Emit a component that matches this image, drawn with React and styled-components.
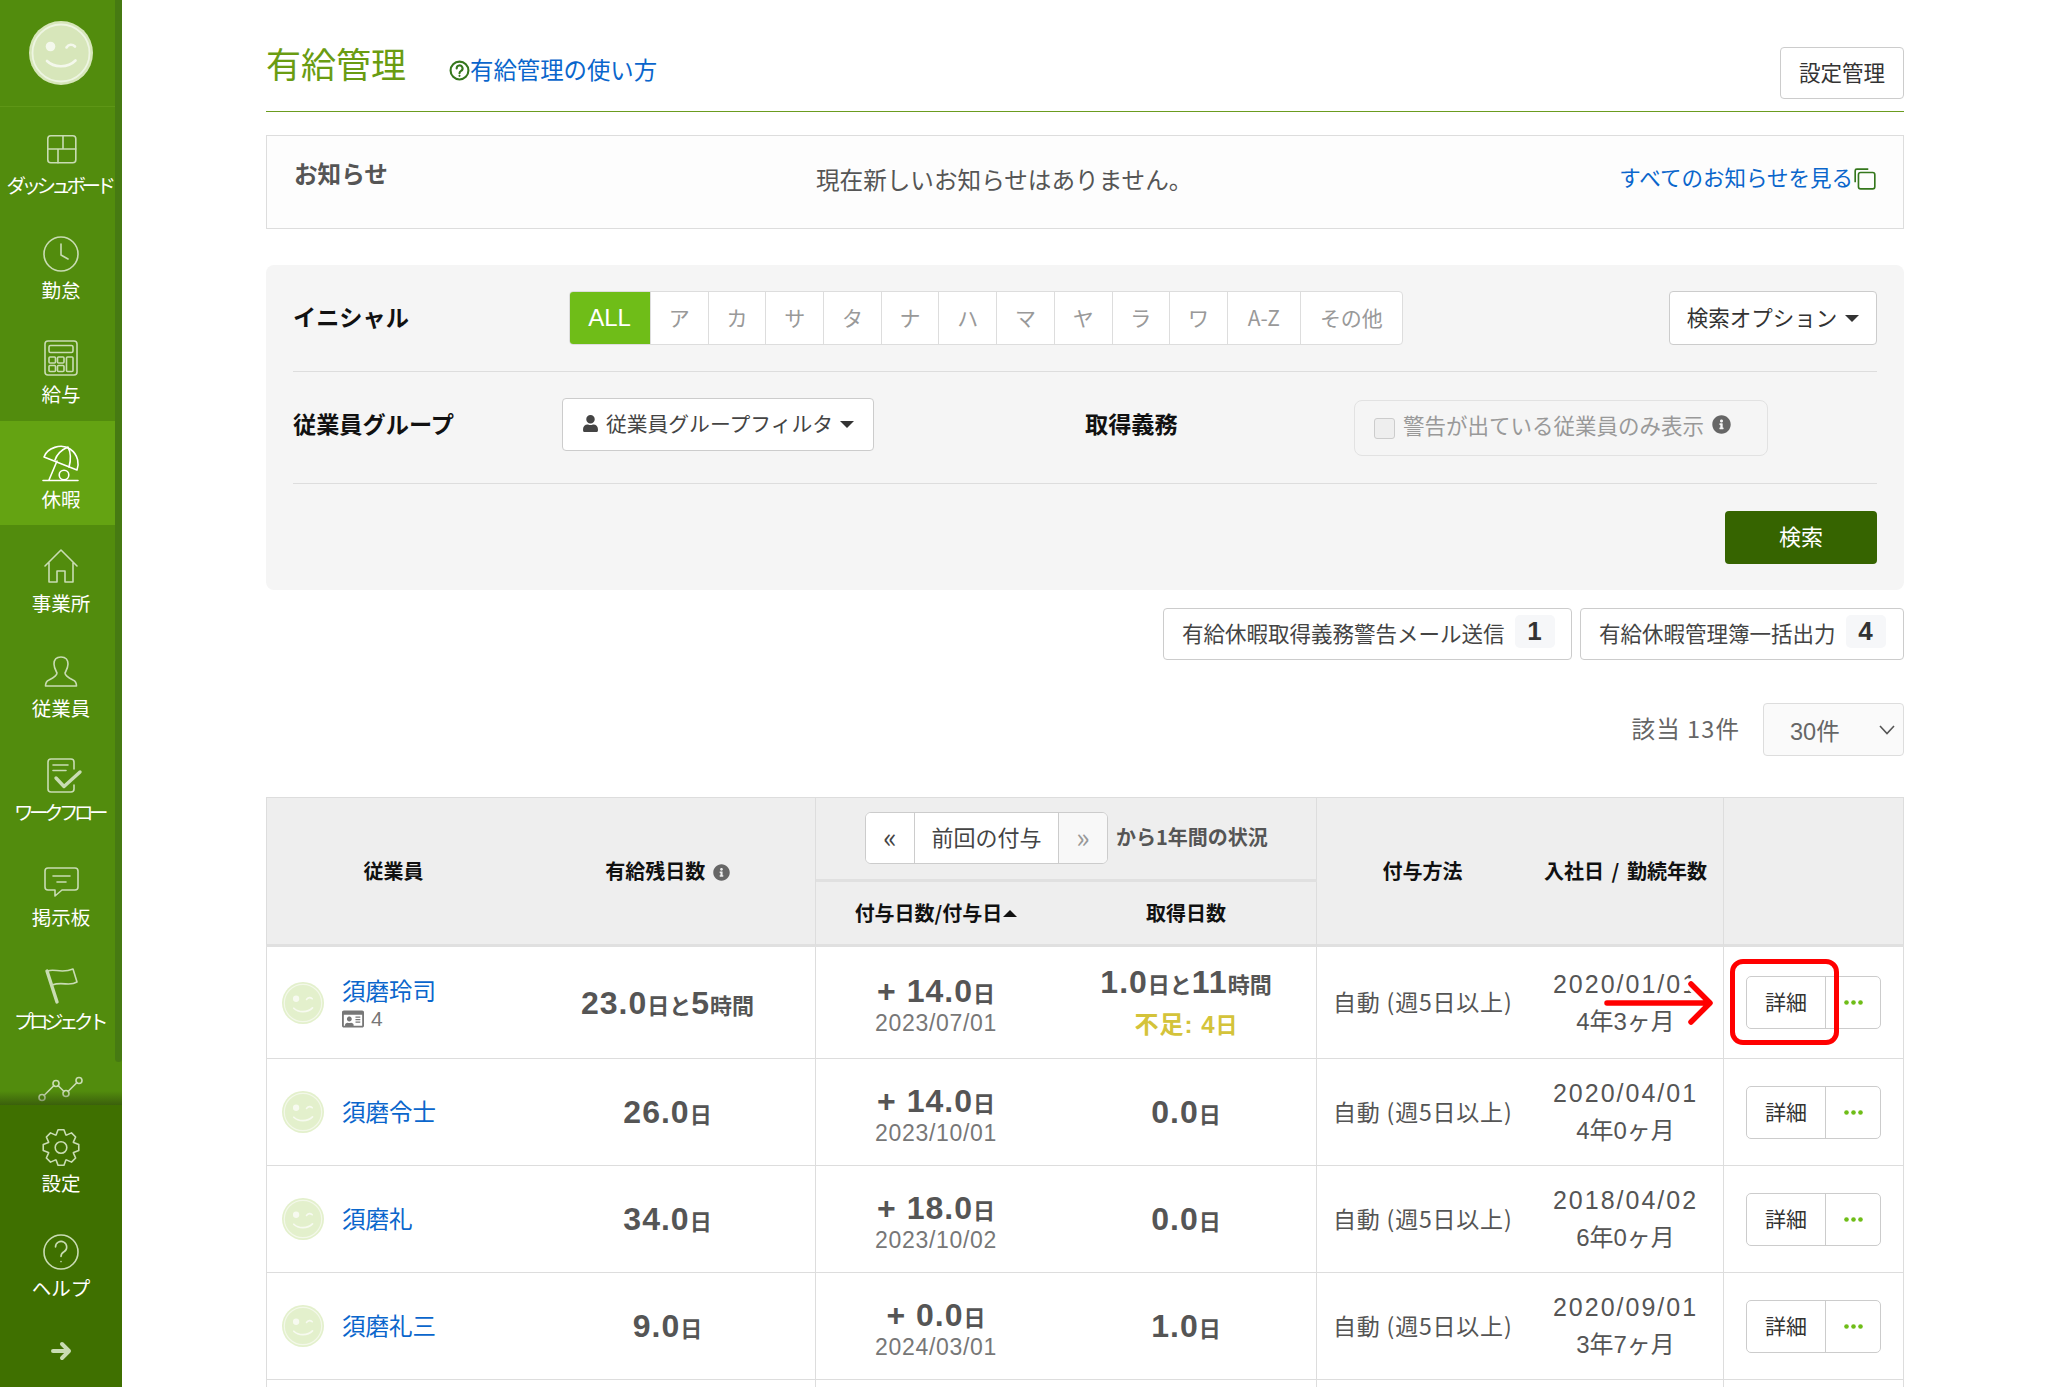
import React from "react";
import styled, { createGlobalStyle, css } from "styled-components";
import { FaUser, FaInfoCircle, FaRegIdCard } from "react-icons/fa";

const FONT = `"Liberation Sans", "Noto Sans CJK JP", sans-serif`;

const Global = createGlobalStyle`
  html, body { margin: 0; height: 100%; overflow: hidden; background: #fff; }
  body { font-family: ${FONT}; color: #555; }
  * { box-sizing: border-box; }
`;

const Page = styled.div`
  display: flex;
  width: 2048px;
  height: 1387px;
  overflow: hidden;
`;

/* ---------- sidebar ---------- */
const Sidebar = styled.aside`
  flex: 0 0 122px;
  display: flex;
  flex-direction: column;
  background: #528c0d;
  height: 100%;
`;
const ScrollArea = styled.div`
  position: relative;
  flex: 0 0 1105px;
  overflow: hidden;
`;
const Thumb = styled.div`
  position: absolute;
  top: 0;
  right: 0;
  width: 7px;
  height: 1062px;
  background: #467a12;
  border-radius: 0 0 4px 4px;
`;
const Fade = styled.div`
  position: absolute;
  left: 0;
  right: 0;
  bottom: 0;
  height: 14px;
  background: linear-gradient(rgba(40, 60, 10, 0), rgba(40, 60, 10, 0.55));
`;
const LogoBox = styled.div`
  height: 107px;
  display: flex;
  justify-content: center;
  padding-top: 21px;
  border-bottom: 1px solid #5e9616;
`;
const NavItem = styled.div`
  height: 104.5px;
  padding-top: 24px;
  display: flex;
  flex-direction: column;
  align-items: center;
  color: #c9dcb3;
  ${(p) => p.$active && css`background: #64a312; color: #fff;`}
`;
const NavLabel = styled.span`
  margin-top: 4px;
  margin-left: ${(p) => p.$tight ? "-4px" : "0"};
  height: 28px;
  line-height: 28px;
  font-size: 19.5px;
  color: #fff;
  white-space: nowrap;
  letter-spacing: ${(p) => p.$tight ? "-4.5px" : "0"};
  font-family: "Noto Sans CJK JP", sans-serif;
`;
const NavSvg = styled.svg`
  width: 44px;
  height: 36px;
  fill: none;
  stroke: currentColor;
  stroke-width: 1.6;
  stroke-linecap: round;
  stroke-linejoin: round;
  overflow: visible;
`;
const SideFoot = styled.div`
  flex: 1;
  background: #3f7000;
`;
const ArrowItem = styled.div`
  height: 72px;
  padding-top: 27px;
  display: flex;
  justify-content: center;
  color: #c9dcb3;
`;

const gearPoints = () => {
  const pts = [];
  const n = 8;
  for (let i = 0; i < n; i++) {
    const a = (i / n) * Math.PI * 2 - Math.PI / 2;
    const w = Math.PI / n;
    const p = (r, o) => `${(22 + r * Math.cos(a + o)).toFixed(2)} ${(18.5 + r * Math.sin(a + o)).toFixed(2)}`;
    pts.push(p(13.5, -w * 0.95), p(18, -w * 0.42), p(18, w * 0.42), p(13.5, w * 0.95));
  }
  return "M" + pts.join(" L") + " Z";
};

const icons = {
  dash: <><rect x="8.8" y="4.8" width="28" height="27" rx="3" /><path d="M8.8 18H36.8M24 4.8V18M19 18V31.8" /></>,
  clock: <><circle cx="22" cy="18" r="17" /><path d="M22 8V19L29 23" /></>,
  calc: <><rect x="6" y="1" width="32" height="34" rx="3" /><rect x="10" y="5.5" width="24" height="7" rx="1.5" /><rect x="10" y="17" width="6.5" height="6" rx="1" /><rect x="18.5" y="17" width="6.5" height="6" rx="1" /><rect x="10" y="25.5" width="6.5" height="6" rx="1" /><rect x="18.5" y="25.5" width="6.5" height="6" rx="1" /><rect x="27.5" y="17" width="6.5" height="14.5" rx="1" /></>,
  umbrella: <><path d="M5 12C8 3 22 -2 31 4C40 10 40 20 38 25Z" /><path d="M29 2C22 5 18 9 16 15M29 2C32 8 32 15 30 22M18 16L10 35M4 35.5H39" /><circle cx="25" cy="30" r="4.8" /></>,
  house: <path d="M6 17L22 1L38 17M10 14V33H18V22H26V33H34V14" />,
  person: <path d="M22 3C17 3 15 6 15 10C15 14 17 17 18 19C18 22 14 24 10 26C7.5 27 6.5 29 6.5 32H37.5C37.5 29 36.5 27 34 26C30 24 26 22 26 19C27 17 29 14 29 10C29 6 27 3 22 3Z" />,
  doc: <><path d="M35 11V4A3 3 0 0 0 32 1H12A3 3 0 0 0 9 4V31A3 3 0 0 0 12 34H32A3 3 0 0 0 35 31V27M14 7H29M14 12.5H27" /><path d="M17 20L25 28.5L41 14" strokeWidth="3.4" /></>,
  chat: <path d="M9 5H36A3 3 0 0 1 39 8V24A3 3 0 0 1 36 27H23L16 33V27H9A3 3 0 0 1 6 24V8A3 3 0 0 1 9 5ZM14 13H31M18 19H27" />,
  flag: <><path d="M8 4L18 35" strokeWidth="3.4" /><path d="M9 4C15 1 22 7 34 2L38 15C30 20 24 14 13 18" /></>,
  graph: <><path d="M5 23.5L15 13.5M19 13.5L25 19.5M29 19.5L38 10.5" /><circle cx="3" cy="25.5" r="3" /><circle cx="17" cy="11.5" r="3" /><circle cx="27" cy="21.5" r="3" /><circle cx="40" cy="8.5" r="3" /></>,
  gear: <><path d={gearPoints()} /><circle cx="22" cy="18.5" r="5.8" /></>,
  help: <><circle cx="22" cy="18" r="17" /><path d="M16.5 13A5.6 5.6 0 1 1 25 17.8C23 19 22 20.4 22 22.5M22 27.5V27.6" /></>,
};

const navTop = [
  ["dash", "ダッシュボード", true],
  ["clock", "勤怠"],
  ["calc", "給与"],
  ["umbrella", "休暇", false, true],
  ["house", "事業所"],
  ["person", "従業員"],
  ["doc", "ワークフロー", true],
  ["chat", "掲示板"],
  ["flag", "プロジェクト", true],
  ["graph", ""],
];

const Nav = ({ icon, label, tight, active }) => (
  <NavItem $active={active}>
    <NavSvg viewBox="0 0 44 36">{icons[icon]}</NavSvg>
    {label && <NavLabel $tight={tight}>{label}</NavLabel>}
  </NavItem>
);

const Smile = ({ size, fill, ring, mark }) => (
  <svg width={size} height={size} viewBox="0 0 64 64" style={{ display: "block", flex: "none" }}>
    <circle cx="32" cy="32" r="32" fill={fill} />
    <circle cx="32" cy="32" r="28.5" fill="none" stroke={ring} strokeWidth="1.8" />
    <circle cx="21.5" cy="25.5" r="4.8" fill={mark} />
    <path d="M37.5 26.5C39.5 23 43.5 23 46 25.5" fill="none" stroke={mark} strokeWidth="2.6" strokeLinecap="round" />
    <path d="M18 40C25 47 39 47 46.5 39.5" fill="none" stroke={mark} strokeWidth="2.6" strokeLinecap="round" />
  </svg>
);

/* ---------- main ---------- */
const Main = styled.main`
  flex: 1;
  padding: 0 144px;
  min-width: 0;
`;
const Header = styled.header`
  height: 112px;
  display: flex;
  align-items: flex-start;
  border-bottom: 1px solid #6b9c1f;
`;
const Title = styled.h1`
  margin: 38px 0 0;
  font-size: 35px;
  line-height: 50px;
  font-weight: 400;
  color: #6a9c12;
  font-family: "Noto Sans CJK JP", sans-serif;
`;
const HelpLink = styled.a`
  margin: 51px 0 0 43px;
  display: flex;
  align-items: center;
  font-size: 23.4px;
  line-height: 36px;
  color: #0a66cc;
  font-family: "Noto Sans CJK JP", sans-serif;
`;
const QMark = styled.svg`
  width: 21px;
  height: 21px;
  margin-top: 2px;
  fill: none;
  stroke: #35771c;
  stroke-width: 2;
  stroke-linecap: round;
`;
const OutlineButton = styled.button`
  height: ${(p) => p.$h || 52}px;
  padding: 0 18px 3px;
  background: #fff;
  border: 1px solid #ccc;
  border-radius: 4px;
  color: #333;
  font: 21.5px "Noto Sans CJK JP", sans-serif;
  white-space: nowrap;
  display: inline-flex;
  align-items: center;
  gap: 8px;
`;
const SettingsButton = styled(OutlineButton)`
  margin: 47px 0 0 auto;
  width: 124px;
  justify-content: center;
  padding: 0 0 3px;
`;
const Notice = styled.section`
  margin-top: 23px;
  height: 94px;
  display: flex;
  align-items: flex-start;
  background: #fdfdfd;
  border: 1px solid #ddd;
  font-family: "Noto Sans CJK JP", sans-serif;
`;
const NoticeTitle = styled.strong`
  margin: 20px 0 0 27px;
  width: 522px;
  flex: none;
  font-size: 23.6px;
  line-height: 34px;
  color: #555;
`;
const NoticeText = styled.span`
  margin-top: 26px;
  font-size: 23.6px;
  line-height: 34px;
  color: #555;
  white-space: nowrap;
`;
const AllLink = styled.a`
  margin: 25px 26px 0 auto;
  display: flex;
  align-items: center;
  font-size: 21.5px;
  line-height: 32px;
  color: #0a66cc;
  white-space: nowrap;
`;
const CopySvg = styled.svg`
  width: 24px;
  height: 24px;
  margin-top: 3px;
  fill: none;
  stroke: #35771c;
  stroke-width: 1.5;
`;
const Panel = styled.section`
  margin-top: 36px;
  height: 325px;
  padding: 0 27px;
  background: #f5f5f5;
  border-radius: 8px;
  font-family: "Noto Sans CJK JP", sans-serif;
`;
const InitialRow = styled.div`
  height: 107px;
  padding-top: 26px;
  display: grid;
  grid-template-columns: 276px auto 1fr;
  align-items: start;
  border-bottom: 1px solid #ddd;
`;
const FilterRow = styled.div`
  height: 112px;
  padding-top: 26px;
  display: grid;
  grid-template-columns: 269px 523px 269px 1fr;
  align-items: start;
  border-bottom: 1px solid #ddd;
`;
const FieldLabel = styled.strong`
  font-size: 23.2px;
  line-height: ${(p) => p.$lh || 51}px;
  color: #111;
  white-space: nowrap;
`;
const Segments = styled.div`
  display: flex;
  height: 54px;
  border: 1px solid #ddd;
  border-radius: 4px;
  background: #fff;
  overflow: hidden;
`;
const Seg = styled.span`
  width: ${(p) => p.$w}px;
  display: flex;
  align-items: center;
  justify-content: center;
  padding-bottom: 3px;
  font-size: 21px;
  color: #999;
  border-left: 1px solid #ddd;
  &:first-child { border-left: 0; }
  ${(p) => p.$on && css`
    background: #6fbd18;
    color: #fff;
    padding-bottom: 0;
    margin: -1px 0 -1px -1px;
    font: 24px "Liberation Sans", sans-serif;
  `}
`;
const Caret = styled.i`
  display: inline-block;
  width: 0;
  height: 0;
  margin-top: 3px;
  border: 7px solid transparent;
  border-top-color: #333;
  border-bottom: 0;
`;
const OptionButton = styled(OutlineButton)`
  justify-self: end;
  width: 208px;
  height: 54px;
  justify-content: center;
  padding: 0 0 3px;
`;
const GroupButton = styled(OutlineButton)`
  width: 312px;
  height: 53px;
  justify-content: center;
  padding: 0 0 3px;
  gap: 7px;
  color: #444;
  font-size: 20.8px;
`;
const WarnBox = styled.label`
  width: 414px;
  height: 56px;
  margin-top: 2px;
  padding: 0 0 7px 19px;
  display: flex;
  align-items: center;
  gap: 8px;
  border: 1px solid #e2e2e2;
  border-radius: 8px;
  font-size: 21.5px;
  color: #999;
  white-space: nowrap;
`;
const FakeCheck = styled.span`
  width: 21px;
  height: 21px;
  flex: none;
  margin-top: 7px;
  background: #eee;
  border: 1.5px solid #ccc;
  border-radius: 3px;
`;
const InfoIcon = styled(FaInfoCircle)`
  width: ${(p) => p.$s || 18}px;
  height: ${(p) => p.$s || 18}px;
  color: #666;
  flex: none;
  vertical-align: -2px;
  margin-left: ${(p) => p.$ml || 0}px;
`;
const SearchRow = styled.div`
  padding-top: 27px;
  display: flex;
  justify-content: flex-end;
`;
const SearchButton = styled.button`
  width: 152px;
  height: 53px;
  padding-bottom: 6px;
  background: #366400;
  border: 0;
  border-radius: 4px;
  color: #fff;
  font: 22px "Noto Sans CJK JP", sans-serif;
`;
const BulkRow = styled.div`
  margin-top: 18px;
  display: flex;
  justify-content: flex-end;
  gap: 8px;
`;
const BulkButton = styled(OutlineButton)`
  width: ${(p) => p.$w}px;
  padding: 0 18px 3px;
  color: #444;
  gap: 10px;
  position: relative;
`;
const Badge = styled.span`
  width: 40px;
  height: 33px;
  margin-top: -3px;
  display: flex;
  align-items: center;
  justify-content: center;
  background: #f6f7f9;
  border-radius: 5px;
  font: bold 26px "Liberation Sans", sans-serif;
  color: #333;
  flex: none;
`;
const CountRow = styled.div`
  margin-top: 43px;
  height: 53px;
  display: flex;
  justify-content: flex-end;
  align-items: center;
  gap: 23px;
  font-family: "Noto Sans CJK JP", sans-serif;
`;
const CountText = styled.span`
  font-size: 23.5px;
  color: #666;
  white-space: nowrap;
  margin-top: -3px;
  letter-spacing: 1.1px;
  font-family: "Noto Sans CJK JP", sans-serif;
`;
const SelectBox = styled.div`
  width: 141px;
  height: 53px;
  padding: 0 6px 0 26px;
  display: flex;
  align-items: center;
  justify-content: space-between;
  background: #fafafa;
  border: 1px solid #ddd;
  border-radius: 4px;
  font: 23.5px "Liberation Sans", "Noto Sans CJK JP", sans-serif;
  color: #666;
`;

/* ---------- table ---------- */
const Table = styled.table`
  margin-top: 41px;
  width: 1638px;
  table-layout: fixed;
  border-collapse: separate;
  border-spacing: 0;
  font-family: "Liberation Sans", "Noto Sans CJK JP", sans-serif;
`;
const Th = styled.th`
  padding: 0 0 2px;
  background: #eee;
  font-size: 20px;
  font-weight: 700;
  color: #111;
  text-align: center;
  white-space: nowrap;
  word-spacing: 3px;
  border-top: ${(p) => p.$top ? "1px solid #ddd" : "0"};
  border-bottom: 3px solid #e0e0e0;
  border-left: ${(p) => p.$left ? "1px solid #ddd" : "0"};
  border-right: ${(p) => p.$right ? "1px solid #ddd" : "0"};
  font-family: "Noto Sans CJK JP", sans-serif;
`;
const Tr = styled.tr`
  height: ${(p) => p.$h}px;
`;
const Td = styled.td`
  padding: ${(p) => p.$pad || 0};
  text-align: ${(p) => p.$align || "center"};
  vertical-align: middle;
  border-bottom: 1px solid #ddd;
  border-left: ${(p) => p.$left ? "1px solid #ddd" : "0"};
  border-right: ${(p) => p.$right ? "1px solid #ddd" : "0"};
  white-space: nowrap;
  color: #555;
`;
const PagerRow = styled.div`
  display: flex;
  align-items: center;
  padding-left: 49px;
  gap: 8px;
`;
const Pager = styled.div`
  display: flex;
  height: 52px;
  border: 1px solid #ccc;
  border-radius: 6px;
  overflow: hidden;
  background: #fff;
`;
const PagerCell = styled.span`
  width: ${(p) => p.$w}px;
  display: flex;
  align-items: center;
  justify-content: center;
  padding-bottom: 3px;
  font-size: ${(p) => p.$fs || 22}px;
  font-weight: 400;
  color: ${(p) => p.$muted ? "#999" : "#444"};
  background: ${(p) => p.$muted ? "#f8f8f8" : "#fff"};
  border-left: 1px solid #ccc;
  &:first-child { border-left: 0; }
`;
const PagerNote = styled.span`
  font-size: 20px;
  color: #555;
  margin-top: -2px;
`;
const SortCaret = styled.i`
  display: inline-block;
  width: 0;
  height: 0;
  margin: 0 0 4px 1px;
  border: 7px solid transparent;
  border-bottom-color: #111;
  border-top: 0;
`;
const NameCell = styled.div`
  display: flex;
  align-items: center;
  padding-left: 15px;
  gap: 18px;
`;
const NameStack = styled.div`
  display: flex;
  flex-direction: column;
  margin-top: -2px;
`;
const NameLink = styled.a`
  font: 23.5px/34px "Noto Sans CJK JP", sans-serif;
  color: #0a66cc;
`;
const IdLine = styled.span`
  display: flex;
  align-items: center;
  gap: 7px;
  height: 24px;
  font-size: 21px;
  color: #777;
`;
const Big = styled.span`
  font-size: ${(p) => p.$s || 32}px;
  font-weight: 700;
  letter-spacing: 1px;
  color: ${(p) => p.$c || "#555"};
  line-height: ${(p) => p.$lh || 36}px;
`;
const Small = styled.span`
  font-size: 22px;
  font-weight: 700;
  color: ${(p) => p.$c || "#555"};
  font-family: "Noto Sans CJK JP", sans-serif;
`;
const Line = styled.div`
  line-height: ${(p) => p.$lh || 36}px;
  height: ${(p) => p.$lh || 36}px;
`;
const GrantStack = styled.div`
  padding-top: ${(p) => p.$top || 0}px;
`;
const DateLine = styled.div`
  font-size: 23px;
  line-height: 28px;
  letter-spacing: 0.7px;
  color: #777;
`;
const JoinDate = styled.div`
  font-size: 25px;
  line-height: 38px;
  letter-spacing: 2px;
  color: #555;
`;
const Tenure = styled.div`
  font-size: 24px;
  line-height: 38px;
  color: #555;
`;
const Method = styled.span`
  display: inline-block;
  padding-bottom: 3px;
  font-size: 23px;
  color: #555;
  font-family: "Noto Sans CJK JP", sans-serif;
  letter-spacing: 0.8px;
`;
const ActionWrap = styled.div`
  position: relative;
  display: flex;
  justify-content: center;
`;
const ActionGroup = styled.div`
  width: 135px;
  height: 53px;
  display: flex;
  border: 1px solid #ccc;
  border-radius: 5px;
  background: #fff;
`;
const DetailBtn = styled.span`
  width: 79px;
  display: flex;
  align-items: center;
  justify-content: center;
  padding-bottom: 3px;
  border-right: 1px solid #ccc;
  font: 21px "Noto Sans CJK JP", sans-serif;
  color: #333;
`;
const MoreBtn = styled.span`
  flex: 1;
  display: flex;
  align-items: center;
  justify-content: center;
`;
const RedBox = styled.div`
  position: absolute;
  left: 6px;
  top: -17px;
  width: 109px;
  height: 86px;
  border: 5.5px solid #f00;
  border-radius: 13px;
`;
const RedArrow = styled.svg`
  position: absolute;
  left: -123px;
  top: 4px;
  width: 112px;
  height: 46px;
  overflow: visible;
`;

const Dots = () => (
  <svg width="19" height="5" viewBox="0 0 19 5" style={{ display: "block" }}>
    <circle cx="2.5" cy="2.5" r="2.3" fill="#6fbd18" /><circle cx="9.5" cy="2.5" r="2.3" fill="#6fbd18" /><circle cx="16.5" cy="2.5" r="2.3" fill="#6fbd18" />
  </svg>
);

const rows = [
  { h: 112, name: "須磨玲司", id: "4", balance: <><Big>23.0</Big><Small>日と</Small><Big>5</Big><Small>時間</Small></>, plus: "+ 14.0", date: "2023/07/01",
    taken: <><Big $lh={38}>1.0</Big><Small>日と</Small><Big $lh={38}>11</Big><Small>時間</Small></>, short: true, join: "2020/01/01", ten: "4年3ヶ月", mark: true },
  { h: 107, name: "須磨令士", balance: <><Big>26.0</Big><Small>日</Small></>, plus: "+ 14.0", date: "2023/10/01", taken: <><Big>0.0</Big><Small>日</Small></>, join: "2020/04/01", ten: "4年0ヶ月" },
  { h: 107, name: "須磨礼", balance: <><Big>34.0</Big><Small>日</Small></>, plus: "+ 18.0", date: "2023/10/02", taken: <><Big>0.0</Big><Small>日</Small></>, join: "2018/04/02", ten: "6年0ヶ月" },
  { h: 107, name: "須磨礼三", balance: <><Big>9.0</Big><Small>日</Small></>, plus: "+ 0.0", date: "2024/03/01", taken: <><Big>1.0</Big><Small>日</Small></>, join: "2020/09/01", ten: "3年7ヶ月" },
];

const kana = ["ア", "カ", "サ", "タ", "ナ", "ハ", "マ", "ヤ", "ラ", "ワ"];

export default function App() {
  return (
    <Page>
      <Global />
      <Sidebar>
        <ScrollArea>
          <LogoBox><Smile size={64} fill="#d7e6ba" ring="#eef5e2" mark="#f4f8ec" /></LogoBox>
          {navTop.map(([icon, label, tight, active]) => (
            <Nav key={icon} icon={icon} label={label} tight={tight} active={active} />
          ))}
          <Thumb />
          <Fade />
        </ScrollArea>
        <SideFoot>
          <Nav icon="gear" label="設定" />
          <Nav icon="help" label="ヘルプ" />
          <ArrowItem>
            <svg width="22" height="20" viewBox="0 0 22 20" fill="none" stroke="currentColor" strokeWidth="4" strokeLinecap="round" strokeLinejoin="round">
              <path d="M3 10H19M12 3L19 10L12 17" />
            </svg>
          </ArrowItem>
        </SideFoot>
      </Sidebar>

      <Main>
        <Header>
          <Title>有給管理</Title>
          <HelpLink>
            <QMark viewBox="0 0 20 20"><circle cx="10" cy="10" r="8.5" /><path d="M7.3 8A2.8 2.8 0 1 1 11.5 10.4C10.5 11 10 11.6 10 12.6M10 15V15.1" /></QMark>
            有給管理の使い方
          </HelpLink>
          <SettingsButton>設定管理</SettingsButton>
        </Header>

        <Notice>
          <NoticeTitle>お知らせ</NoticeTitle>
          <NoticeText>現在新しいお知らせはありません。</NoticeText>
          <AllLink>
            すべてのお知らせを見る
            <CopySvg viewBox="0 0 22 22"><path d="M2 14V3.5A1.5 1.5 0 0 1 3.5 2H14" /><rect x="5" y="5" width="15" height="15" rx="2" /></CopySvg>
          </AllLink>
        </Notice>

        <Panel>
          <InitialRow>
            <FieldLabel>イニシャル</FieldLabel>
            <Segments>
              <Seg $w={81} $on>ALL</Seg>
              {kana.map((k) => <Seg key={k} $w={57.7}>{k}</Seg>)}
              <Seg $w={73}>A-Z</Seg>
              <Seg $w={102}>その他</Seg>
            </Segments>
            <OptionButton>検索オプション <Caret /></OptionButton>
          </InitialRow>
          <FilterRow>
            <FieldLabel $lh={50}>従業員グループ</FieldLabel>
            <div>
              <GroupButton><FaUser size={17} color="#444" />従業員グループフィルタ <Caret /></GroupButton>
            </div>
            <FieldLabel $lh={50}>取得義務</FieldLabel>
            <WarnBox><FakeCheck />警告が出ている従業員のみ表示 <InfoIcon $s={19} /></WarnBox>
          </FilterRow>
          <SearchRow><SearchButton>検索</SearchButton></SearchRow>
        </Panel>

        <BulkRow>
          <BulkButton $w={409}>有給休暇取得義務警告メール送信<Badge>1</Badge></BulkButton>
          <BulkButton $w={324}>有給休暇管理簿一括出力<Badge>4</Badge></BulkButton>
        </BulkRow>

        <CountRow>
          <CountText>該当 13件</CountText>
          <SelectBox>
            30件
            <svg width="20" height="12" viewBox="0 0 20 12" fill="none" stroke="#555" strokeWidth="1.6"><path d="M3 2L10 9.5L17 2" /></svg>
          </SelectBox>
        </CountRow>

        <Table>
          <colgroup>
            <col style={{ width: 254 }} /><col style={{ width: 296 }} /><col style={{ width: 240 }} /><col style={{ width: 261 }} />
            <col style={{ width: 211 }} /><col style={{ width: 196 }} /><col style={{ width: 180 }} />
          </colgroup>
          <thead>
            <Tr $h={85}>
              <Th rowSpan={2} $top $left>従業員</Th>
              <Th rowSpan={2} $top $right>有給残日数 <InfoIcon $s={17} /></Th>
              <Th colSpan={2} $top $right>
                <PagerRow>
                  <Pager>
                    <PagerCell $w={48} $fs={28}>«</PagerCell>
                    <PagerCell $w={144}>前回の付与</PagerCell>
                    <PagerCell $w={49} $fs={28} $muted>»</PagerCell>
                  </Pager>
                  <PagerNote>から1年間の状況</PagerNote>
                </PagerRow>
              </Th>
              <Th rowSpan={2} $top>付与方法</Th>
              <Th rowSpan={2} $top $right>入社日 / 勤続年数</Th>
              <Th rowSpan={2} $top $right></Th>
            </Tr>
            <Tr $h={65}>
              <Th>付与日数/付与日<SortCaret /></Th>
              <Th $right>取得日数</Th>
            </Tr>
          </thead>
          <tbody>
            {rows.map((r) => (
              <Tr key={r.name} $h={r.h}>
                <Td $left>
                  <NameCell>
                    <Smile size={42} fill="#e3f0cc" ring="#f3f8e9" mark="#f7faf0" />
                    <NameStack>
                      <NameLink>{r.name}</NameLink>
                      {r.id && <IdLine><FaRegIdCard size={22} color="#777" />{r.id}</IdLine>}
                    </NameStack>
                  </NameCell>
                </Td>
                <Td $right>{r.balance}</Td>
                <Td>
                  <GrantStack $top={5}>
                    <Line $lh={36}><Big $lh={36}>{r.plus}</Big><Small>日</Small></Line>
                    <DateLine>{r.date}</DateLine>
                  </GrantStack>
                </Td>
                <Td $right>
                  {r.short ? (
                    <GrantStack $top={1}>
                      <Line $lh={40}>{r.taken}</Line>
                      <Line $lh={40}><Big $s={24} $c="#d4c33a">不足: 4</Big><Small $c="#d4c33a">日</Small></Line>
                    </GrantStack>
                  ) : r.taken}
                </Td>
                <Td $align="left" $pad="0 0 0 16px"><Method>自動 (週5日以上)</Method></Td>
                <Td $right>
                  <JoinDate>{r.join}</JoinDate>
                  <Tenure>{r.ten}</Tenure>
                </Td>
                <Td $right>
                  <ActionWrap>
                    <ActionGroup>
                      <DetailBtn>詳細</DetailBtn>
                      <MoreBtn><Dots /></MoreBtn>
                    </ActionGroup>
                    {r.mark && (
                      <>
                        <RedBox />
                        <RedArrow viewBox="0 0 112 46" fill="none" strokeLinecap="round" strokeLinejoin="round">
                          <path d="M90 4L109 23L90 42" stroke="#fff" strokeWidth="12" />
                          <path d="M6 23H107M90 4L109 23L90 42" stroke="#f00" strokeWidth="5.5" />
                        </RedArrow>
                      </>
                    )}
                  </ActionWrap>
                </Td>
              </Tr>
            ))}
            <Tr $h={60}>
              <Td $left></Td><Td $right></Td><Td></Td><Td $right></Td><Td></Td><Td $right></Td><Td $right></Td>
            </Tr>
          </tbody>
        </Table>
      </Main>
    </Page>
  );
}
